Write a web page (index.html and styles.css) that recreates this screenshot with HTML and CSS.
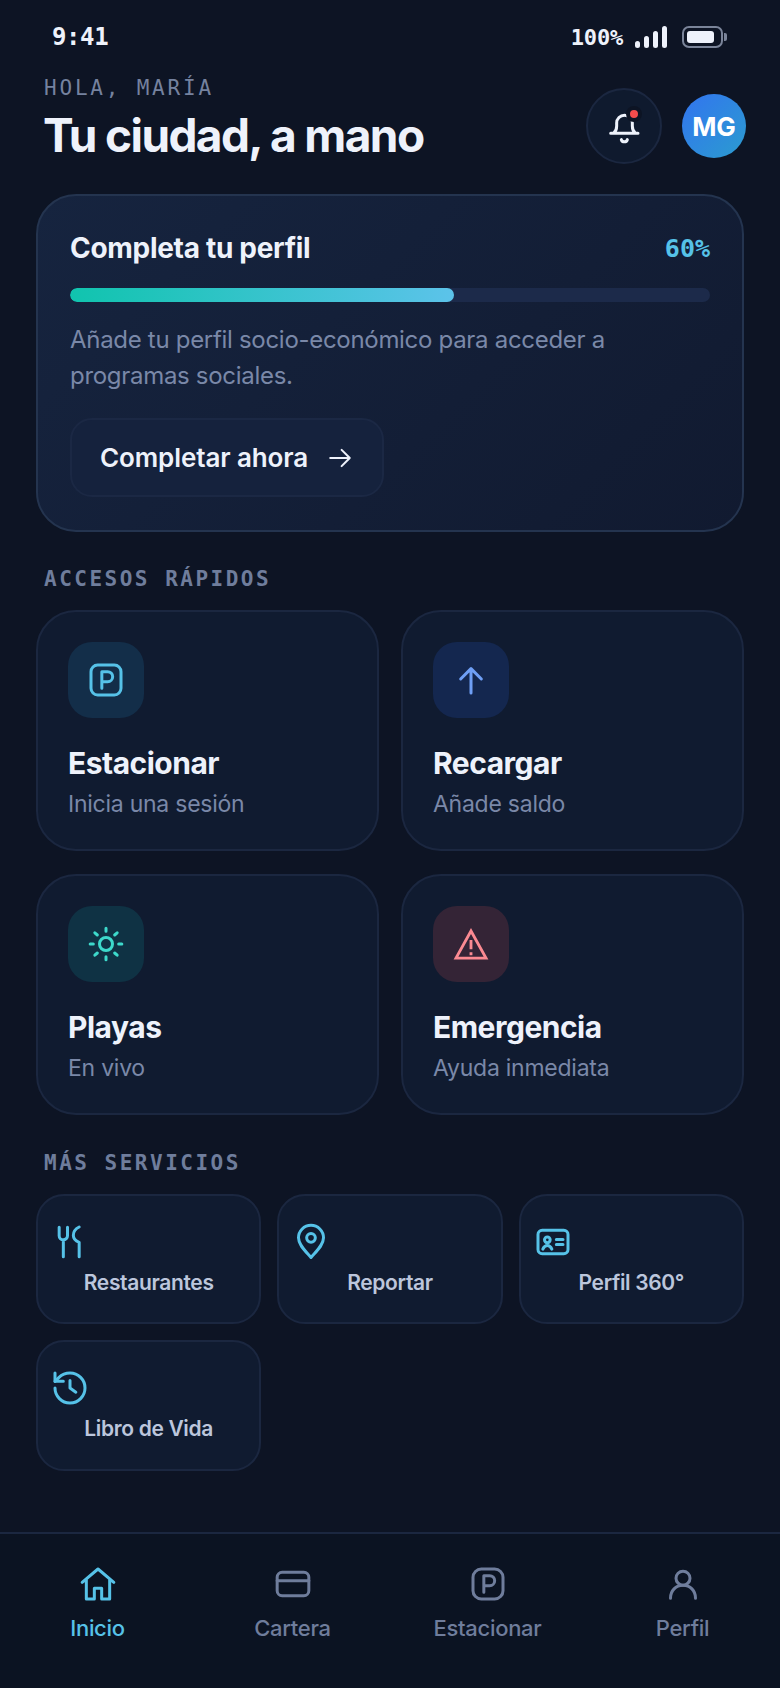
FILE: index.html
```html
<!DOCTYPE html>
<html lang="es">
<head>
  <meta charset="UTF-8">
  <title>Tu ciudad, a mano</title>
  <link rel="stylesheet" href="styles.css">
</head>
<body>
  <div class="status">
    <span class="time">9:41</span>
    <div class="status-right">
      <span class="pct">100%</span>
      <div class="signal"><i class="b1"></i><i class="b2"></i><i class="b3"></i><i class="b4"></i></div>
      <div class="battery"><div class="battery-body"><i></i></div><div class="battery-nub"></div></div>
    </div>
  </div>

  <header class="header">
    <div>
      <div class="hello">HOLA, MARÍA</div>
      <h1>Tu ciudad, a mano</h1>
    </div>
    <div class="header-actions">
      <button class="bell">
        <svg class="icon" viewBox="0 0 24 24"><path d="M4 16.400h16.400M5.900 16.200c1.200-1 1.700-2.400 1.700-4.200v-1.800a4.700 4.700 0 0 1 9.400 0V12c0 1.800.5 3.200 1.700 4.200M10.400 20.200a1.900 1.900 0 0 0 3.600 0"/></svg>
        <span class="bell-dot"></span>
      </button>
      <div class="avatar">MG</div>
    </div>
  </header>

  <main class="main">
    <section class="hero">
      <div class="hero-top">
        <h2>Completa tu perfil</h2>
        <span class="hero-pct">60%</span>
      </div>
      <div class="progress"><div class="progress-fill"></div></div>
      <p>Añade tu perfil socio-económico para acceder a programas sociales.</p>
      <button class="hero-btn">
        Completar ahora
        <svg class="arrow" viewBox="0 0 24 24"><path d="M3 12h18M13.500 4.500 21 12l-7.500 7.500"/></svg>
      </button>
    </section>

    <div class="section-label first">ACCESOS RÁPIDOS</div>
    <div class="quick-grid">
      <a class="quick-card">
        <div class="tile tile-sky">
          <svg class="icon" viewBox="0 0 24 24"><rect x="3" y="3" width="18" height="18" rx="4"/><path d="M9.500 17V7H13a3 3 0 0 1 0 6H9.500"/></svg>
        </div>
        <h3>Estacionar</h3>
        <span>Inicia una sesión</span>
      </a>
      <a class="quick-card">
        <div class="tile tile-blue">
          <svg class="icon" viewBox="0 0 24 24"><path d="M12 19.800V5.200M5.800 11.400 12 5.200l6.200 6.200"/></svg>
        </div>
        <h3>Recargar</h3>
        <span>Añade saldo</span>
      </a>
      <a class="quick-card">
        <div class="tile tile-teal">
          <svg class="icon" viewBox="0 0 24 24"><circle cx="12" cy="12" r="3.900"/><path d="M12 2.500v1.900M12 19.600v1.900M2.500 12h1.900M19.600 12h1.900M5.300 5.300l1.500 1.300M17.200 17.400l1.500 1.300M5.300 18.700l1.500-1.300M17.200 6.600l1.500-1.300"/></svg>
        </div>
        <h3>Playas</h3>
        <span>En vivo</span>
      </a>
      <a class="quick-card">
        <div class="tile tile-red">
          <svg class="icon icon-miter" viewBox="0 0 24 24"><path d="M12 4.200 21 20.500H3z"/><path d="M12 9.600v5.600M12 16.900v1.800"/></svg>
        </div>
        <h3>Emergencia</h3>
        <span>Ayuda inmediata</span>
      </a>
    </div>

    <div class="section-label">MÁS SERVICIOS</div>
    <div class="service-grid">
      <a class="service-card">
        <svg class="icon" viewBox="0 0 24 24"><path d="M5.500 3.200v5a2.500 2.500 0 0 0 5 0v-5M8 10.700v10.100M17.500 3c-2 1-3.500 3-3.500 5s1.500 3.500 3.500 4.200v8.600"/></svg>
        <span>Restaurantes</span>
      </a>
      <a class="service-card">
        <svg class="icon" viewBox="0 0 24 24"><path d="M12 21.300C9 17.800 4.500 14 4.500 9.500a7.500 7.500 0 0 1 15 0c0 4.500-4.500 8.300-7.500 11.800z"/><circle cx="12" cy="9.500" r="2.600"/></svg>
        <span>Reportar</span>
      </a>
      <a class="service-card">
        <svg class="icon" viewBox="0 0 24 24"><rect x="3" y="5" width="18" height="14" rx="2.500"/><circle cx="8.600" cy="10.700" r="1.700"/><path d="M5.900 16.300c.6-1.500 1.600-2.200 2.700-2.200s2.100.7 2.700 2.200M14 10.500h4M14 13.500h4"/></svg>
        <span>Perfil 360°</span>
      </a>
      <a class="service-card">
        <svg class="icon" viewBox="0 0 24 24"><path d="M3 12a9 9 0 1 0 9-9 9.750 9.750 0 0 0-6.740 2.740L3 8"/><path d="M3 3v5h5M12 7.500V12l3.500 2.500"/></svg>
        <span>Libro de Vida</span>
      </a>
    </div>
  </main>

  <nav class="nav">
    <a class="nav-item active">
      <svg class="icon" viewBox="0 0 24 24"><path d="M2.500 11 12 3l9.500 8M5 9v12h4.800v-6.500h4.400V21H19V9"/></svg>
      <span>Inicio</span>
    </a>
    <a class="nav-item">
      <svg class="icon" viewBox="0 0 24 24"><rect x="2.500" y="5" width="19" height="14" rx="3"/><path d="M2.500 10h19"/></svg>
      <span>Cartera</span>
    </a>
    <a class="nav-item">
      <svg class="icon" viewBox="0 0 24 24"><rect x="3" y="3" width="18" height="18" rx="5"/><path d="M9.500 17V7H13a3 3 0 0 1 0 6H9.500"/></svg>
      <span>Estacionar</span>
    </a>
    <a class="nav-item">
      <svg class="icon" viewBox="0 0 24 24"><circle cx="12" cy="8.500" r="4.200"/><path d="M4.500 20.500c0-4.500 3.200-7.800 7.500-7.800s7.500 3.300 7.500 7.800"/></svg>
      <span>Perfil</span>
    </a>
  </nav>
</body>
</html>
```

FILE: styles.css
```css
* {
  box-sizing: border-box;
}
body {
  margin: 0;
  height: 1688px;
  display: flex;
  flex-direction: column;
  background-color: #0d1424;
  color: #eef2fb;
  font-family: Inter, "Noto Sans", sans-serif;
  overflow: hidden;
}
h1, h2, h3, p {
  margin: 0;
}
button {
  font-family: inherit;
  cursor: pointer;
}

.icon {
  width: 40px;
  height: 40px;
  flex: none;
  fill: none;
  stroke: currentColor;
  stroke-width: 1.8;
  stroke-linecap: round;
  stroke-linejoin: round;
}
.icon-miter {
  stroke-linecap: butt;
  stroke-linejoin: miter;
  stroke-width: 1.700;
}

/* status bar */
.status {
  height: 74px;
  flex: none;
  padding: 0 53px 0 52px;
  display: flex;
  align-items: center;
  justify-content: space-between;
  font-family: "DejaVu Sans Mono", monospace;
  font-weight: 700;
}
.time {
  font-size: 24px;
  letter-spacing: -0.4px;
}
.status-right {
  display: flex;
  align-items: center;
}
.pct {
  font-size: 22px;
  letter-spacing: -0.2px;
  margin-right: 12px;
}
.signal {
  display: flex;
  align-items: flex-end;
  gap: 4px;
  height: 22px;
  margin-right: 15px;
}
.signal i {
  display: block;
  width: 5px;
  border-radius: 3px;
  background: #eef2fb;
}
.b1 { height: 7px; }
.b2 { height: 12px; }
.b3 { height: 17px; }
.b4 { height: 22px; }
.battery {
  display: flex;
  align-items: center;
  gap: 1px;
}
.battery-body {
  width: 41px;
  height: 22px;
  border: 2px solid #7a8499;
  border-radius: 7px;
  padding: 3px 7px 3px 3px;
}
.battery-body i {
  display: block;
  height: 100%;
  border-radius: 3px;
  background: #eef2fb;
}
.battery-nub {
  width: 3px;
  height: 8px;
  border-radius: 0 2px 2px 0;
  background: #7a8499;
}

/* header */
.header {
  height: 104px;
  flex: none;
  padding: 2px 34px 0 44px;
  display: flex;
  justify-content: space-between;
}
.hello {
  font-family: "DejaVu Sans Mono", monospace;
  font-size: 21px;
  line-height: 24px;
  letter-spacing: 2.8px;
  color: #75829f;
}
h1 {
  margin: 9px 0 0 -1px;
  font-size: 46px;
  line-height: 52px;
  font-weight: 700;
  letter-spacing: -1.6px;
}
.header-actions {
  display: flex;
  align-items: center;
  gap: 20px;
  margin-top: -2px;
}
.bell {
  position: relative;
  width: 76px;
  height: 76px;
  display: flex;
  align-items: center;
  justify-content: center;
  border: 2px solid #1b2740;
  border-radius: 50%;
  background: #0f1a2e;
  color: #eef2fb;
  padding: 0;
}
.bell-dot {
  position: absolute;
  top: 16px;
  left: 38px;
  width: 16px;
  height: 16px;
  border: 4px solid #0d1424;
  border-radius: 50%;
  background: #f44c4c;
}
.avatar {
  width: 64px;
  height: 64px;
  display: flex;
  align-items: center;
  justify-content: center;
  border-radius: 50%;
  background: linear-gradient(135deg, #3274f0, #2b9ccf);
  font-size: 26px;
  font-weight: 700;
  color: #fff;
}

/* content */
.main {
  flex: 1;
  padding: 16px 36px 0;
}
.hero {
  padding: 34px 32px 33px;
  border: 2px solid #24344f;
  border-radius: 40px;
  background: linear-gradient(135deg, #16243f, #111a30);
}
.hero-top {
  display: flex;
  align-items: center;
  justify-content: space-between;
  height: 36px;
}
.hero-top h2 {
  font-size: 28px;
  font-weight: 700;
  letter-spacing: -0.3px;
}
.hero-pct {
  font-family: "DejaVu Sans Mono", monospace;
  font-size: 25px;
  font-weight: 700;
  color: #56c2e8;
}
.progress {
  margin-top: 22px;
  height: 14px;
  border-radius: 7px;
  background: #1c2a4a;
  overflow: hidden;
}
.progress-fill {
  width: 60%;
  height: 100%;
  border-radius: 7px;
  background: linear-gradient(90deg, #10c4ae, #5cc3ea);
}
.hero p {
  margin-top: 20px;
  font-size: 24px;
  line-height: 36px;
  letter-spacing: -0.3px;
  color: #7a88a8;
}
.hero-btn {
  margin-top: 24px;
  height: 79px;
  width: 314px;
  padding: 0 28px;
  display: flex;
  align-items: center;
  gap: 19px;
  border: 2px solid #1b2844;
  border-radius: 22px;
  background: #15223d;
  color: #eef2fb;
  font-size: 26px;
  font-weight: 600;
  letter-spacing: -0.1px;
  white-space: nowrap;
}
.arrow {
  width: 26px;
  height: 26px;
  fill: none;
  stroke: currentColor;
  stroke-width: 1.900;
  stroke-linecap: round;
  stroke-linejoin: round;
}

.section-label {
  margin: 36px 0 19px 8px;
  font-family: "DejaVu Sans Mono", monospace;
  font-size: 21px;
  line-height: 24px;
  font-weight: 700;
  letter-spacing: 2.5px;
  color: #6f7d9c;
}
.section-label.first {
  margin-top: 35px;
}

.quick-grid {
  display: grid;
  grid-template-columns: 1fr 1fr;
  gap: 23px 22px;
}
.quick-card {
  height: 241px;
  padding: 30px;
  border: 2px solid #1b2740;
  border-radius: 40px;
  background: #101b30;
  display: block;
}
.tile {
  width: 76px;
  height: 76px;
  display: flex;
  align-items: center;
  justify-content: center;
  border-radius: 24px;
}
.tile-sky { background: #132e49; color: #56c2e8; }
.tile-blue { background: #14274f; color: #6f9ff5; }
.tile-teal { background: #0f3244; color: #3dd9cb; }
.tile-red { background: #342436; color: #fb8a92; }
.quick-card h3 {
  margin-top: 27px;
  font-size: 30px;
  line-height: 36px;
  font-weight: 700;
  letter-spacing: -0.5px;
}
.quick-card span {
  display: block;
  margin-top: 8px;
  font-size: 23px;
  line-height: 30px;
  letter-spacing: -0.25px;
  color: #7a88a8;
}

.service-grid {
  display: grid;
  grid-template-columns: repeat(3, 1fr);
  grid-template-rows: 130px 131px;
  gap: 16px;
}
.service-card {
  padding: 26px 12px 0;
  border: 2px solid #1b2740;
  border-radius: 28px;
  background: #101b30;
  color: #56c2e8;
  display: flex;
  flex-direction: column;
  align-items: flex-start;
}
.service-card span {
  align-self: stretch;
  margin-top: 7px;
  text-align: center;
  font-size: 21px;
  line-height: 28px;
  font-weight: 600;
  letter-spacing: -0.35px;
  color: #bcc6dc;
}

/* bottom nav */
.nav {
  height: 156px;
  flex: none;
  padding-top: 30px;
  display: grid;
  grid-template-columns: repeat(4, 1fr);
  border-top: 2px solid #1b2740;
  background: #0b1322;
}
.nav-item {
  display: flex;
  flex-direction: column;
  align-items: center;
  color: #6f7d9c;
}
.nav-item span {
  margin-top: 9px;
  font-size: 22px;
  line-height: 30px;
  font-weight: 500;
  letter-spacing: -0.3px;
}
.nav-item.active {
  color: #56c2e8;
}
```
